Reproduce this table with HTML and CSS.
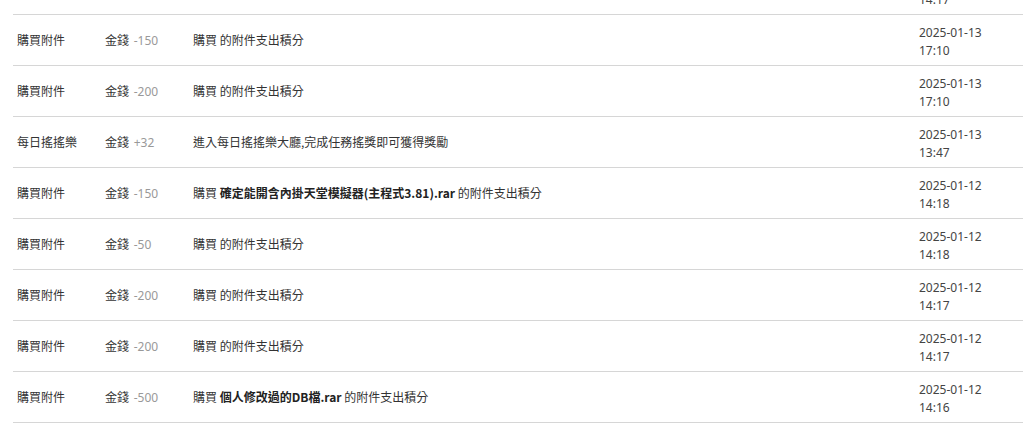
FILE: index.html
```html
<!DOCTYPE html>
<html lang="zh-Hant">
<head>
<meta charset="utf-8">
<title>積分記錄</title>
<link rel="stylesheet" href="styles.css">
</head>
<body>
<div class="wrap">
<table class="log">
<colgroup><col class="c1"><col class="c2"><col class="c3"><col class="c4"></colgroup>
<tbody>
<tr class="partial"><td></td><td></td><td></td><td>2025-01-12<br>14:17</td></tr>
<tr><td>購買附件</td><td>金錢 <span class="num">-150</span></td><td>購買 的附件支出積分</td><td>2025-01-13<br>17:10</td></tr>
<tr><td>購買附件</td><td>金錢 <span class="num">-200</span></td><td>購買 的附件支出積分</td><td>2025-01-13<br>17:10</td></tr>
<tr><td>每日搖搖樂</td><td>金錢 <span class="num">+32</span></td><td>進入每日搖搖樂大廳,完成任務搖獎即可獲得獎勵</td><td>2025-01-13<br>13:47</td></tr>
<tr><td>購買附件</td><td>金錢 <span class="num">-150</span></td><td>購買 <b>確定能開含內掛天堂模擬器(主程式3.81).rar</b> 的附件支出積分</td><td>2025-01-12<br>14:18</td></tr>
<tr><td>購買附件</td><td>金錢 <span class="num">-50</span></td><td>購買 的附件支出積分</td><td>2025-01-12<br>14:18</td></tr>
<tr><td>購買附件</td><td>金錢 <span class="num">-200</span></td><td>購買 的附件支出積分</td><td>2025-01-12<br>14:17</td></tr>
<tr><td>購買附件</td><td>金錢 <span class="num">-200</span></td><td>購買 的附件支出積分</td><td>2025-01-12<br>14:17</td></tr>
<tr><td>購買附件</td><td>金錢 <span class="num">-500</span></td><td>購買 <b>個人修改過的DB檔.rar</b> 的附件支出積分</td><td>2025-01-12<br>14:16</td></tr>
</tbody>
</table>
</div>
</body>
</html>
```
FILE: styles.css
```css
html, body {
  margin: 0;
  padding: 0;
  background: #fff;
}
body {
  font-family: "Noto Sans", "Noto Sans CJK TC", sans-serif;
  font-size: 12px;
  color: #333;
}
.wrap {
  padding: 0 9px 0 13px;
  margin-top: -36px;
}
.log {
  width: 1010px;
  border-collapse: collapse;
  table-layout: fixed;
}
.c1 { width: 88px; }
.c2 { width: 88px; }
.c3 { width: 726px; }
.c4 { width: 108px; }
.log td {
  height: 50px;
  padding: 0 4px;
  border-bottom: 1px solid #d6d6d6;
  vertical-align: middle;
  line-height: 18px;
  font-family: "Noto Sans CJK TC", sans-serif;
  white-space: nowrap;
}
.log td:nth-child(4) {
  padding-top: 3px;
  height: 47px;
  font-family: "Noto Sans", "Noto Sans CJK TC", sans-serif;
  color: #444;
}
.num {
  margin-left: 2px;
  color: #999;
  font-family: "Noto Sans", sans-serif;
}
.log b {
  font-weight: bold;
  color: #222;
}
```
